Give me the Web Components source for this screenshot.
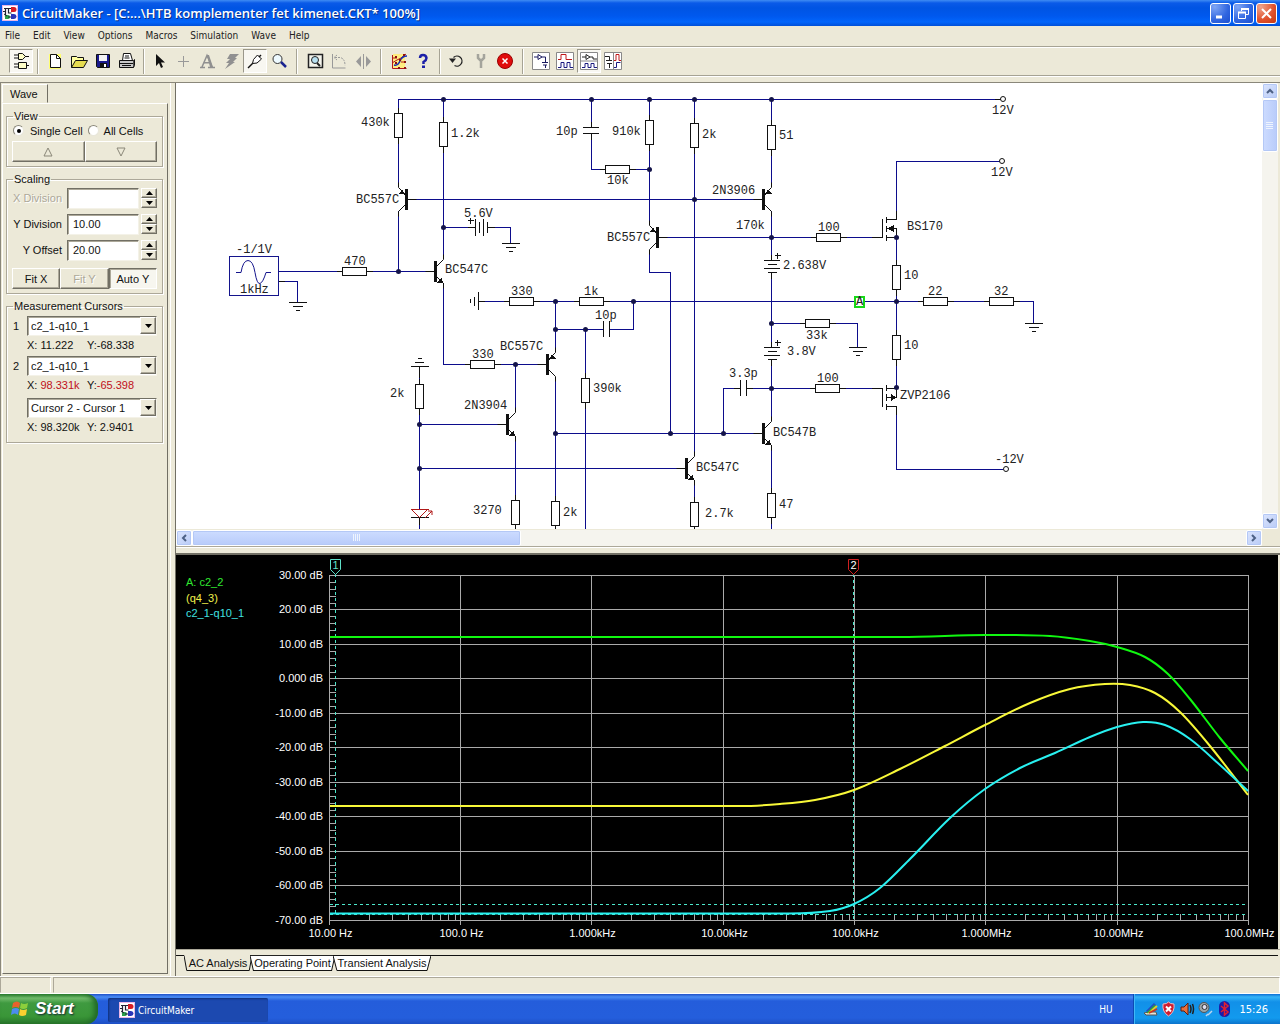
<!DOCTYPE html>
<html lang="en">
<head>
<meta charset="utf-8">
<title>CircuitMaker</title>
<style>
html,body{margin:0;height:100%}
body{background:#ece9d8;overflow:hidden}
</style>
</head>
<body>
<circuit-app></circuit-app>
<script>
const UI = '"DejaVu Sans Condensed","DejaVu Sans",sans-serif';
const SANS = '"Liberation Sans",Arial,sans-serif';
const BASE = ':host{display:block;box-sizing:border-box}*{box-sizing:border-box}button,input,select{font:inherit;color:inherit;margin:0;padding:0;border:0;border-radius:0;background:none;appearance:none}svg{display:block}';

function define(name, css, html) {
  customElements.define(name, class extends HTMLElement {
    constructor() {
      super();
      this.attachShadow({ mode: 'open' });
    }
    connectedCallback() {
      const body = typeof html === 'function' ? html(this) : html;
      this.shadowRoot.innerHTML = '<style>' + BASE + css + '</style>' + body;
    }
  });
}

const APP_ICON = `<svg width="16" height="16" viewBox="0 0 16 16"><rect width="16" height="16" fill="#e9b6e6"/><rect x="1" y="1" width="14" height="14" fill="#fff"/>
<path d="M2 3.500h7M3.500 3v9M6.500 3v5h3M1 6.500h3" stroke="#223" stroke-width="1.200" fill="none"/><path d="M9 2h3a2.500 2.500 0 0 1 0 5H9z" fill="#d81c24"/><path d="M3 10h3a2 2 0 0 1 0 4H3z" fill="#2aa14c"/><path d="M9 9h3a2.500 2.500 0 0 1 0 5H9z" fill="#2b35b8"/><path d="M2 9l3 2M9 12H6" stroke="#223"/></svg>`;

/* ---------- title bar ---------- */
define('title-bar', `
:host{height:26px;background:linear-gradient(#3f8cf3 0,#0a5ae8 3px,#0054e3 8px,#0058ee 16px,#0265fb 22px,#0150d8 26px);display:flex;align-items:center;padding:0 3px 0 2px;gap:4px;color:#fff}
h1{flex:1;margin:0;font:600 13px "Open Sans","Noto Sans",sans-serif;white-space:nowrap;text-shadow:1px 1px 0 #0a2f86}
.b{width:21px;height:21px;border:1px solid #fff;border-radius:3px;background:radial-gradient(circle at 20% 15%,#7fa6f5,#3066e0 60%,#1c4fd0);display:grid;place-items:center}
.x{background:radial-gradient(circle at 20% 15%,#f0a48c,#e0502b 60%,#c63a12)}
.w{display:flex;gap:2px}`,
`${APP_ICON}<h1>CircuitMaker - [C:...\\HTB komplementer fet kimenet.CKT* 100%]</h1><div class="w">
<button class="b" aria-label="Minimize"><svg width="13" height="13"><path d="M2 10h6" stroke="#fff" stroke-width="3"/></svg></button>
<button class="b" aria-label="Restore"><svg width="13" height="13" fill="none" stroke="#fff"><path d="M4.500 4V1.500h7v6H9" /><path d="M4 2h8M1 5.500h8" stroke-width="2"/><path d="M1.500 5.500h7v6h-7z"/></svg></button>
<button class="b x" aria-label="Close"><svg width="13" height="13"><path d="M2 2l9 9M11 2l-9 9" stroke="#fff" stroke-width="2"/></svg></button></div>`);

/* ---------- menu bar ---------- */
define('menu-bar', `
:host{height:20px;padding-left:5px;font:10px ${UI};color:#222}
nav{display:flex;gap:13px;height:18px;align-items:center}`,
'<nav>' + ['File', 'Edit', 'View', 'Options', 'Macros', 'Simulation', 'Wave', 'Help'].map(t => `<button>${t}</button>`).join('') + '</nav>');

/* ---------- tool bar ---------- */
const ICONS = {
  parts: `<g fill="#ffffc8" stroke="#111"><path d="M6.500 1.500h4l3 3-3 3h-4zM2 3h4M2 6h4M13 4.500h4M6.500 10.500h8v6h-8zM2 12h4M2 15h4M15 13.500h2" /></g>`,
  new: `<path d="M3 2h12v15H3z" fill="#ffff70"/><path d="M4.500 2.500h6l4 4v9h-10z" fill="#fff" stroke="#111"/><path d="M10.500 2.500v4h4" fill="none" stroke="#111"/>`,
  open: `<path d="M1.500 15.500v-11h5l1 1h6v3" fill="#ffffa0" stroke="#111"/><path d="M1.500 15.500l4-7h12l-4 7z" fill="#e6dc50" stroke="#111"/>`,
  save: `<path d="M2.500 2.500h13v13h-12l-1-1z" fill="#1a1a8c" stroke="#111"/><path d="M5 3h8v6H5z" fill="#f4f4f4"/><path d="M6 11h7v4H6z" fill="#111"/><path d="M10 12h2v3h-2z" fill="#fff"/>`,
  print: `<path d="M4.500 8.500l1-7h7l2 7" fill="#fff" stroke="#111"/><path d="M7 4h4M6.500 6h5" stroke="#111"/><path d="M1.500 8.500h14v7h-14z" fill="#c8c8c8" stroke="#111"/><path d="M2 11.500h13M4 13.500h9" stroke="#111"/><path d="M15.500 8.500l1-1v6l-1 2" fill="#888" stroke="#111"/>`,
  arrow: `<path d="M5 2v12l3-3 2 5 2-1-2-4.500h4z" fill="#111"/>`,
  plus: `<path d="M9.500 4v11M4 9.500h11" stroke="#999"/>`,
  text: `<path d="M2 15.500h5M10 15.500h7M4 15L9 3.500 14 15" stroke="#909090" stroke-width="1.500" fill="none"/><path d="M9 3l2 0 4 12h-3zM6 10h6v1.500H6z" fill="#909090"/>`,
  bolt: `<path d="M8 2h9l-4 4h2l-4 4h2L3 17l4-6H4l4-4H5z" fill="#909090"/>`,
  probe: `<path d="M2 16l5-5" stroke="#111" stroke-width="1.500"/><path d="M6.500 11.500l1-4 4-4.500 4 4-4.500 4z" fill="#fff" stroke="#111"/><path d="M13 5l2-2" stroke="#111" stroke-width="1.500"/>`,
  lens: `<circle cx="7.500" cy="7" r="4.500" fill="#eefaff" stroke="#333"/><path d="M11 10l5 5" stroke="#1a2490" stroke-width="2.500"/>`,
  fit: `<path d="M2.500 2.500h14v13h-14z" fill="#f4f4ec" stroke="#222" stroke-width="1.500"/><circle cx="9" cy="8" r="3.500" fill="#b8e0f0" stroke="#222"/><path d="M11 11l3 3" stroke="#222" stroke-width="2"/>`,
  rotate: `<path d="M2.500 2v14h13" stroke="#999" fill="none"/><path d="M5 5.500h5q5 1 5 8M7 3L4 5.500 7 8" stroke="#999" stroke-dasharray="2 1" fill="none"/>`,
  mirror: `<path d="M7 4v11L2 9.500zM12 4v11l5-5.500z" fill="#999"/><path d="M9.500 2v15" stroke="#999"/>`,
  scope: `<path d="M3 2h12v15H3z" fill="#ffee80"/><path d="M2.500 3v13.500h14M2 11l5-3 4-2 5-4M3 6h4M11 10h5" stroke="#b01818" fill="none"/><path d="M4 13q4 1 6-4t7-5" stroke="#1830b0" stroke-width="1.500" fill="none"/><path d="M5 4h2v2H5zM13 2h2v2h-2zM9 7h2v2H9zM5 10h2v2H5zM14 9h2v2h-2zM8 15h2v2H8zM14 15h2v2h-2z" fill="#8c1010"/>`,
  help: `<path d="M6 6q0-3 3-3t3.500 3q0 2-3 4v2" stroke="#1c20a8" stroke-width="2.500" fill="none"/><path d="M8 13.500h3V16H8z" fill="#1c20a8"/>`,
  reset: `<path d="M5.500 5.500a5 5 0 1 1 1 8" stroke="#222" stroke-width="1.300" fill="none"/><path d="M1 6.500h7L4.500 11z" fill="#222"/>`,
  step: `<path d="M6 2v4l2 2h2l2-2V2M9 8v8" stroke="#a4a49c" stroke-width="2.500" fill="none"/>`,
  stop: `<circle cx="9" cy="9" r="7.500" fill="#e00c0c" stroke="#900"/><path d="M6.500 6.500l5 5M11.500 6.500l-5 5" stroke="#fff" stroke-width="1.500"/>`,
  w1: `<path d="M.5.500h17v17H.5z" fill="#fff" stroke="#888"/><path d="M2 5h4M6 2.500v5l4-2.500zM10 5h3.500v5M10 10.500h6M11 13h4M13.500 13v3" stroke="#1a1a60" fill="none"/>`,
  w2: `<path d="M.5.500h17v17H.5z" fill="#fff" stroke="#888"/><path d="M2 7.500h3v-5h5v5h6" stroke="#c01818" fill="none"/><path d="M2 15.500h3v-5h3v5h3v-5h3v5h3" stroke="#1a1a80" fill="none"/>`,
  w3: `<path d="M.5.500h17v17H.5z" fill="#fff" stroke="#888"/><path d="M2 5h4M6 2.500v5l4-2.500zM10 5h3v2h4" stroke="#222" fill="none"/><path d="M0 9h18" stroke="#888"/><path d="M2 15.500h3v-4h3v4h3v-4h3v4h3" stroke="#1a1a80" fill="none"/>`,
  w4: `<path d="M.5.500h17v17H.5z" fill="#fff" stroke="#888"/><path d="M9.500 0v18" stroke="#888"/><path d="M1 4.500h4.500v4M2 8.500h6M3 11.500h5M5.500 11v5" stroke="#222" fill="none"/><path d="M10 8.500h2v-6h3v6h2" stroke="#c01818" fill="none"/><path d="M10 15.500h2.500v-5h4" stroke="#1a1a80" fill="none"/>`
};
define('tool-button', `
:host{width:24px;height:24px}
:host([narrow]){width:22px}
button{width:100%;height:100%;display:grid;place-items:center;border:1px solid transparent}
:host([pressed]) button{background:#f8f7f1;border-color:#9a978a #fff #fff #9a978a}`,
el => `<button aria-label="${el.getAttribute('icon')}"><svg width="18" height="18" viewBox="0 0 18 18">${ICONS[el.getAttribute('icon')]}</svg></button>`);
define('tool-sep', `:host{width:10px;height:25px;display:flex;justify-content:center}:host([wide]){width:12px}i{width:2px;background:#a6a394;border-right:1px solid #fff}`, '<i></i>');
const tb = s => s.split(' ').map(n => n === '|' ? '<tool-sep></tool-sep>' : n === '||' ? '<tool-sep wide></tool-sep>'
  : `<tool-button icon="${n.replace(/[!~]/, '')}"${n.endsWith('!') ? ' pressed' : ''}${n.endsWith('~') ? ' narrow' : ''}></tool-button>`).join('');
define('tool-bar', `
:host{height:30px;border-top:1px solid #a6a394;border-bottom:1px solid #a6a394;box-shadow:inset 0 1px #fff,0 1px #fff;display:flex;align-items:center;padding-left:9px}`,
tb('parts! | new open save print | arrow~ plus text bolt probe! lens || fit rotate mirror || scope help | reset step stop || w1 w2 w3! w4'));

/* ---------- wave side panel ---------- */
define('group-box', `
fieldset{margin:0;min-width:0;border:1px solid #aca899;box-shadow:1px 1px #fff,inset 1px 1px #fff;padding:0 5px 4px;position:relative}
legend{padding:0 1px;margin-left:1px;line-height:12px;height:12px}`,
el => `<fieldset><legend>${el.getAttribute('label')}</legend><slot></slot></fieldset>`);

const RAISED = 'background:#ece9d8;border:1px solid;border-color:#fff #716f64 #716f64 #fff;box-shadow:inset -1px -1px #aca899';
define('cell-view', `
.r{display:flex;height:17px;align-items:center;padding-left:1px}
label{display:flex;align-items:center;gap:6px;line-height:14px;margin-right:5px}
label+label{gap:5px}
input{width:11px;height:11px;border-radius:50%;background:#fff;border:1px solid #8a877a;border-right-color:#e8e6da;border-bottom-color:#e8e6da;display:grid;place-items:center}
input:checked::after{content:"";width:4px;height:4px;border-radius:50%;background:#000}
.b{display:flex;margin-top:2px}
.b button{flex:1;height:21px;${RAISED};display:grid;place-items:center}`,
`<div class="r"><label><input type="radio" name="c" checked>Single Cell</label><label><input type="radio" name="c">All Cells</label></div>
<div class="b"><button aria-label="Up"><svg width="10" height="10"><path d="M5 1l4 8H1z" fill="none" stroke="#8a8778"/></svg></button><button aria-label="Down"><svg width="10" height="10"><path d="M5 9l4-8H1z" fill="none" stroke="#8a8778"/></svg></button></div>`);

define('number-row', `
:host{display:flex;align-items:center;height:26px}
label{width:50px;text-align:right;white-space:nowrap}
:host([off]) label{color:#aca899;text-shadow:1px 1px #fff}
input{flex:1;min-width:0;height:21px;margin:0 2px 0 5px;background:#fff;padding:0 0 0 5px;border:1px solid;border-color:#716f64 #f4f2e8 #f4f2e8 #716f64;box-shadow:inset 1px 1px #aca899}
.s{width:16px;display:grid}
.s button{height:10px;${RAISED};display:grid;place-items:center}`,
el => `<label for="n">${el.getAttribute('label')}</label><input id="n" value="${el.getAttribute('value')}"${el.hasAttribute('off') ? ' disabled' : ''}>
<div class="s"><button aria-label="Increase"><svg width="7" height="4"><path d="M3.500 0L7 4H0z"/></svg></button><button aria-label="Decrease"><svg width="7" height="4"><path d="M3.500 4L7 0H0z"/></svg></button></div>`);

define('fit-buttons', `
:host{display:flex;margin-top:5px}
button{flex:1;height:21px;${RAISED};white-space:nowrap}
button:disabled{color:#aca899;text-shadow:1px 1px #fff}
.on{background:#f7f6ef;border-color:#716f64 #fff #fff #716f64;box-shadow:inset 1px 1px #aca899;padding-top:1px}`,
'<button>Fit X</button><button disabled>Fit Y</button><button class="on">Auto Y</button>');

define('cursor-pick', `
:host{display:grid;grid-template-columns:14px 1fr;padding-left:1px;align-items:center}
.c{display:grid;height:20px;background:#fff;border:1px solid;border-color:#716f64 #f4f2e8 #f4f2e8 #716f64;box-shadow:inset 1px 1px #aca899}
.c>*{grid-area:1/1}
select{width:100%;padding-left:3px;height:18px}
.a{justify-self:end;width:16px;height:17px;${RAISED};display:grid;place-items:center;pointer-events:none}
p{grid-column:2;margin:0;height:20px;line-height:19px;display:flex;white-space:pre}
p span{width:60px}
:host([red]) b{color:#c01020}
b{font-weight:normal}`,
el => { const a = n => el.getAttribute(n) || '';
  return `<label for="s">${a('n')}</label><div class="c"><select id="s" aria-label="${a('value')}"><option>${a('value')}</option></select><i class="a"><svg width="7" height="4"><path d="M3.500 4L7 0H0z"/></svg></i></div>
<p><span>X: <b>${a('x')}</b></span>Y:<b>${a('y')}</b></p>`; });

define('wave-panel', `
:host{width:176px;font:11px ${SANS};color:#111;display:flex;flex-direction:column;border-left:1px solid #8a877a;border-right:1px solid #716f64;padding:1px 7px 2px 1px;box-shadow:inset -4px 0 #ece9d8,inset -5px 0 #fff}
.t{width:46px;height:19px;border:1px solid;border-color:#fff #716f64 transparent #fff;padding:1px 0 0 7px;text-align:left;line-height:14px}
.p{flex:1;border:1px solid;border-color:#fff #716f64 #716f64 #fff;padding:6px 4px 0 3px}
.g{margin-top:6px}
.top{height:4px}.gap{height:2px}`,
`<button class="t">Wave</button><section class="p">
<group-box label="View"><cell-view></cell-view></group-box>
<group-box class="g" label="Scaling"><number-row off label="X Division" value=""></number-row><number-row label="Y Division" value="10.00"></number-row><number-row label="Y Offset" value="20.00"></number-row><fit-buttons></fit-buttons></group-box>
<group-box class="g" label="Measurement Cursors"><div class="top"></div><cursor-pick n="1" value="c2_1-q10_1" x="11.222" y="-68.338"></cursor-pick><cursor-pick red n="2" value="c2_1-q10_1" x="98.331k" y="-65.398"></cursor-pick><div class="gap"></div><cursor-pick value="Cursor 2 - Cursor 1" x="98.320k" y=" 2.9401"></cursor-pick></group-box>
</section>`);

/* ---------- schematic ---------- */
const wire = d => `<path d="${d}" stroke="#0c0c8c"/>`;
const ink = d => `<path d="${d}" stroke="#111"/>`;
const node = (x, y) => `<circle cx="${x}" cy="${y}" r="2.500" fill="#14144a" stroke="none"/>`;
const resV = (x, y) => ink(`M${x} ${y - 18}v36`) + `<rect x="${x - 4}" y="${y - 12}" width="8" height="24" fill="#fff" stroke="#111"/>`;
const resH = (x, y) => ink(`M${x - 18} ${y}h36`) + `<rect x="${x - 12}" y="${y - 4}" width="24" height="8" fill="#fff" stroke="#111"/>`;
const gnd = (x, y) => ink(`M${x - 9} ${y}h18M${x - 5} ${y + 4}h10M${x - 2} ${y + 8}h4`);
const plus = (x, y) => ink(`M${x - 3} ${y}h6M${x} ${y - 3}v6`);
const cellsV = (x, y) => `<path d="M${x} ${y}v12" stroke="#fff" stroke-width="3"/>` + ink(`M${x - 8} ${y}h16M${x - 4} ${y + 4}h9M${x - 8} ${y + 8}h16M${x - 4} ${y + 12}h9M${x} ${y - 6}v6M${x} ${y + 12}v6`);
/* side: direction from the bar to the emitter/collector leads; emit: -1 up (PNP), 1 down (NPN) */
function bjt(x, y, side, emit) {
  const e = x + side * 8, g = x + side;
  const head = emit < 0
    ? `M${g + side} ${y - 5}l${side * 2} -5l${side * 4} 4z`
    : `M${e} ${y + 12}l${side * -2} -6l${side * -4} 5z`;
  return `<rect x="${x - 1.5}" y="${y - 10.500}" width="3" height="21" fill="#111" stroke="none"/>` +
    `<path d="M${e} ${y - 17}v5L${g} ${y - 5}M${g} ${y + 5}L${e} ${y + 12}v5M${x} ${y}h${-side * 10}" stroke="#111" shape-rendering="auto"/><path d="${head}" fill="#111" stroke="none"/>`;
}
const pin = (x, y) => `<circle cx="${x}" cy="${y}" r="2.500" fill="#fff" stroke="#111" shape-rendering="auto"/>`;
const LABELS = [['430k',361,126],['1.2k',451,137],['BC557C',356,203],['5.6V',464,217],['BC547C',445,273],['-1/1V',236,253],['1kHz',240,293],['470',344,265],['330',511,295],
['10p',556,135],['910k',612,135],['2k',702,138],['51',779,139],['10k',607,184],['2N3906',712,194],['170k',736,229],['BC557C',607,241],['100',818,231],['2.638V',783,269],['1k',584,295],['10p',595,319],
['12V',992,114],['12V',991,176],['BS170',907,230],['10',904,279],['22',928,295],['32',994,295],['10',904,349],['A',856,305],
['BC557C',500,350],['330',472,358],['2k',390,397],['2N3904',464,409],['390k',593,392],['3270',473,514],['2k',563,516],
['33k',806,339],['3.8V',787,355],['3.3p',729,377],['100',817,382],['ZVP2106',900,399],['BC547B',773,436],['BC547C',696,471],['2.7k',705,517],['47',779,508],['-12V',995,463]];
define('schematic-view', `
:host{flex:1;min-width:0;background:#fff;overflow:hidden}
text{font:12px "Liberation Mono","Courier New",monospace;fill:#222}`,
() => `<svg width="100%" height="100%" aria-label="Amplifier schematic"><g transform="translate(-176 -83)"><g fill="none" stroke-width="1" shape-rendering="crispEdges">` +
wire('M398.5 99.500H995M398.5 99v86M443.5 99v158M398.5 211v60M408 199.500H755M443.5 227.500H474M488 227.500h22.500V243M278 271.500H434M278 281.500h19.500V302M443.5 285v79.500H546M479 301.500H896.5M591.5 99v28M591.5 134v35.500H649.5M649.5 99V222M649.5 250v22.500H670.5V433.500M694.5 99V456M771.5 99v86M660 237.500H882M771.5 211V260M771.5 272V347M771.5 359V421M1000 161.500H896.5V217M896.5 237V388M896.5 301.500H1033.5V323M771.5 323.500H857.5V347M555.5 301V352M555.5 329.500H603M610 329.500H633.5V301M585.5 329V530M515.5 364V412M419.5 370V509M419.5 424.500H500M419.5 468.500H680M419.5 517v12M515.5 440V530M555.5 377V530M555.5 433.500H755M723.5 433V388.500H740M747 388.500H882M694.5 481V530M771.5 447V530M896.5 407V469.500H1003') +
ink('M995 99.500h6M475.5 219v17M479.5 222v11M483.5 219v17M487.5 222v11M488 227.500h7M468 227.500h7M278 281.500h7M478.5 292v18M474.5 297v9M470.5 299v4M479 301.500h6M583 127.500h16M583 133.500h16M591.5 122v5M591.5 134v6M603.5 321v16M609.5 321v16M740.5 380v16M746.5 380v16M734 388.500h6M747 388.500h6M411 366.500h18M415 362.500h9M418 358.500h4M419.5 366v12M411 517.500h18M419.5 517v8') +
resV(398.5, 125.500) + resV(443.5, 134.500) + resV(649.5, 132.500) + resV(694.5, 135.500) + resV(771.5, 137.500) + resV(896.5, 277.500) + resV(896.5, 347.500) + resV(419.5, 396.500) + resV(585.5, 390.500) + resV(515.5, 512.500) + resV(555.5, 513.500) + resV(694.5, 514.500) + resV(771.5, 505.500) +
resH(354.5, 271.500) + resH(521.5, 301.500) + resH(591.5, 301.500) + resH(617.5, 169.500) + resH(828.5, 237.500) + resH(935.5, 301.500) + resH(1001.5, 301.500) + resH(482.5, 364.500) + resH(817.5, 323.500) + resH(827.5, 388.500) +
gnd(510.5, 243.500) + gnd(297.5, 302.500) + gnd(1033.5, 323.500) + gnd(857.5, 347.500) +
cellsV(771.5, 260.500) + cellsV(771.5, 347.500) + plus(470.5, 220.500) + plus(777.5, 255.500) + plus(777.5, 342.500) +
bjt(406.5, 199.500, -1, -1) + bjt(435.5, 271.500, 1, 1) + bjt(657.5, 237.500, -1, -1) + bjt(763.5, 199.500, 1, -1) + bjt(547.5, 364.500, 1, -1) + bjt(507.5, 424.500, 1, 1) + bjt(686.5, 468.500, 1, 1) + bjt(763.5, 433.500, 1, 1) +
ink('M872 237.500h10.500V219M886.5 217v6M886.5 226v6M886.5 235v6M886.5 219.500h10V211M886.5 228.500h10V237.500h-10M872 388.500h10.500V407M886.5 385v6M886.5 394v7M886.5 404v6M886.5 388.500h10V397.500h-10M886.5 406.500h10v8') +
`<path d="M887 228.500l7-3.500v7zM896 397.500l-5-3.500v7z" fill="#111"/>` +
`<path d="M411 509.500h18M411.5 509.500l8 8 8-8M425 518l7-7M428 511h4v4" stroke="#b01818" shape-rendering="auto"/>` +
`<path d="M229.5 256.500h49v38.500h-49z" stroke="#14148c"/><path d="M236 272.500h5q2-12 7-12t7 12 5 11 6-11h5" stroke="#14148c" shape-rendering="auto"/>` +
`<rect x="855" y="297" width="9" height="10" fill="#fff" stroke="#18d818" stroke-width="2"/>` +
pin(1003, 99) + pin(1002, 161) + pin(1006, 469) + `</g>` +
[[443.5,99.500],[591.5,99.500],[649.5,99.500],[694.5,99.500],[771.5,99.500],[443.5,227.500],[398.5,271.500],[649.5,169.500],[694.5,199.500],[771.5,237.500],[555.5,301.500],[633.5,301.500],[896.5,301.500],[896.5,237.500],[896.5,387.500],[771.5,323.500],[771.5,388.500],[555.5,329.500],[585.5,329.500],[515.5,364.500],[419.5,424.500],[419.5,468.500],[555.5,433.500],[670.5,433.500],[723.5,433.500]].map(p => node(...p)).join('') +
LABELS.map(([t, x, y]) => `<text x="${x}" y="${y}">${t}</text>`).join('') + `</g></svg>`);

/* ---------- scroll bars ---------- */
define('scroll-bar', `
:host{display:flex;background:#f5f4ee;height:16px}
:host([vertical]){flex-direction:column;width:16px;height:auto}
button,.th{flex:none;width:16px;height:16px;background:linear-gradient(135deg,#dbe5fe,#b9cbf6);border:1px solid #fff;border-radius:2px;box-shadow:inset 0 0 0 1px #b4c8f6;display:grid;place-items:center}
.th{width:329px;background:linear-gradient(#cddcff,#b8cbfa);color:#fff}
:host([vertical]) .th{width:16px;height:53px;background:linear-gradient(90deg,#cddcff,#b8cbfa)}
i{flex:1}`,
el => { const v = el.hasAttribute('vertical');
  const ar = d => `<svg width="8" height="8"><path d="${d}" fill="none" stroke="#4d6185" stroke-width="2"/></svg>`;
  return `<button aria-label="Back">${ar(v ? 'M1 6l3-3 3 3' : 'M6 1L3 4l3 3')}</button><div class="th"><svg width="8" height="8"><path d="${v ? 'M0 .5h7M0 2.500h7M0 4.500h7M0 6.500h7' : 'M.5 0v7M2.500 0v7M4.500 0v7M6.500 0v7'}" stroke="#eef4fe"/></svg></div><i></i><button aria-label="Forward">${ar(v ? 'M1 2l3 3 3-3' : 'M2 1l3 3-3 3')}</button>`; });

/* ---------- wave plot ---------- */
function curve(pts, color) {
  let d = `M${pts[0]}`;
  for (let i = 0; i < pts.length - 1; i++) {
    const a = pts[Math.max(i - 1, 0)], b = pts[i], c = pts[i + 1], e = pts[Math.min(i + 2, pts.length - 1)];
    const flat = b[1] === c[1];
    const k = (c[0] - b[0]) / 3, s1 = i && !flat && a[1] !== b[1] ? (c[1] - a[1]) / (c[0] - a[0]) : 0, s2 = flat ? 0 : (e[1] - b[1]) / (e[0] - b[0]);
    d += `C${b[0] + k} ${b[1] + k * s1} ${c[0] - k} ${c[1] - k * s2} ${c[0]} ${c[1]}`;
  }
  return `<path d="${d}" fill="none" stroke="${color}" stroke-width="2"/>`;
}
define('wave-plot', `
:host{height:394px;background:#000;overflow:hidden}
text{font:11px ${SANS};fill:#fff}`,
() => {
  const X = i => [329, 460, 591, 723, 854, 985, 1117, 1248][i] + .5, Y = i => Math.round(575 + i * 34.490) + .5;
  let g = '', t = '';
  for (let i = 0; i < 8; i++) {
    g += `M${X(i)} 575V925`;
    if (i < 7) for (let k = 2; k < 10; k++) g += `M${Math.round(X(i) + 131.14 * Math.log10(k)) + .5} 914V920`;
  }
  for (let i = 0; i < 11; i++) {
    g += `M330 ${Y(i)}H1248`;
    if (i < 10) for (let k = 1; k < 5; k++) g += `M330 ${Math.round(Y(i) + k * 6.900) + .5}h6`;
    const v = 30 - i * 10;
    t += `<text x="323" y="${Y(i) + 3.5}" text-anchor="end">${v === 0 ? '0.000' : v + '.00'} dB</text>`;
  }
  ['10.00 Hz', '100.0 Hz', '1.000kHz', '10.00kHz', '100.0kHz', '1.000MHz', '10.00MHz', '100.0MHz'].forEach((s, i) => t += `<text x="${X(i) + 1}" y="937" text-anchor="middle">${s}</text>`);
  return `<svg width="100%" height="100%" aria-label="AC analysis plot"><g transform="translate(-176 -555)">
<path d="${g}" stroke="#aaa" fill="none" shape-rendering="crispEdges"/>
<path d="M335.5 574V914M853.5 574V920M330 904.500H1248M330 914.500H1248" stroke="#4ce8cc" stroke-dasharray="3 3" fill="none" shape-rendering="crispEdges"/>` +
  curve([[330, 637], [600, 637], [900, 637], [985, 635], [1050, 636], [1090, 641], [1117, 647], [1145, 657], [1168, 674], [1190, 699], [1220, 738], [1248, 771]], '#10f810') +
  curve([[330, 806], [600, 806], [740, 806], [780, 804], [815, 800], [854, 790], [900, 769], [945, 746], [985, 725], [1030, 703], [1070, 689], [1105, 684], [1130, 685], [1155, 693], [1180, 712], [1210, 746], [1248, 795]], '#f8f838') +
  curve([[330, 913.5], [600, 913.5], [790, 913.5], [830, 911], [854, 904], [880, 888], [910, 859], [950, 818], [985, 789], [1020, 768], [1055, 753], [1090, 737], [1117, 727], [1143, 722], [1165, 725], [1190, 739], [1220, 765], [1248, 791]], '#28f0f0') +
  `<path d="M330.5 559.500h10v10l-5 5-5-5z" fill="#000" stroke="#5fe0c8"/><path d="M848.5 559.500h10v10l-5 5-5-5z" fill="#000" stroke="#d02020"/>
<text x="335.500" y="569" text-anchor="middle" style="fill:#5fe0c8">1</text><text x="853.500" y="569" text-anchor="middle">2</text>
<text x="186" y="586" style="fill:#30e830">A: c2_2</text><text x="186" y="602" style="fill:#f0f04c">(q4_3)</text><text x="186" y="617" style="fill:#40e0e0">c2_1-q10_1</text>` + t + `</g></svg>`;
});

/* ---------- sheet tabs ---------- */
define('sheet-tabs', `
:host{display:flex;height:27px;padding:5px 2px 0 0;font:11px ${SANS};color:#111;border-top:1px solid #aca899}
i{border-top:1px solid #111}
.l{width:8px}.r{flex:1}
button{display:grid;height:17px;width:85px;margin-right:-2px}
button>*{grid-area:1/1}
button svg{width:100%;height:17px}
button:first-of-type{width:68px}button:last-of-type{width:98px}
span{line-height:16px;white-space:nowrap;justify-self:center}`,
'<i class="l"></i>' + [['AC Analysis', 1], ['Operating Point'], ['Transient Analysis']].map(([t, on]) =>
  `<button><svg viewBox="0 0 100 17" preserveAspectRatio="none"><path d="M0 .5L4 15.500H96L100 .5" fill="${on ? '#ece9d8' : '#fff'}" stroke="#111" vector-effect="non-scaling-stroke"/>${on ? '' : '<path d="M0 .5H100" stroke="#111"/>'}</svg><span>${t}</span></button>`).join('') + '<i class="r"></i>');

/* ---------- status bar ---------- */
define('status-bar', `
:host{display:flex;gap:2px;height:18px;border-top:1px solid #fff;border-bottom:1px solid #fff}
i{border:1px solid;border-color:#aca899 #fff transparent #aca899;width:51px}
i+i{flex:1}`, '<i></i><i></i>');

/* ---------- task bar ---------- */
define('task-bar', `
:host{display:flex;height:30px;background:linear-gradient(#1f51c8 0,#4a8cf4 3px,#245ddb 7px,#245edc 24px,#1d4fc4 30px);color:#fff;font:10px ${UI}}
.s{width:98px;height:30px;border-radius:0 12px 12px 0;background:linear-gradient(#2f8a35 0,#74bd6d 4px,#3f9a40 9px,#3a9638 22px,#2a7a2c 30px);box-shadow:inset -4px 0 5px #226a26;display:flex;align-items:center;gap:6px;padding-left:11px;font:italic bold 17px ${SANS};text-shadow:1px 1px 2px #123}
.k{margin:4px 0 2px 10px;width:160px;border-radius:2px;background:#1c49b0;box-shadow:inset 1px 1px 2px #10307c;display:flex;align-items:center;gap:3px;padding-left:11px}
.f{flex:1}
.h{align-self:center;margin-right:21px}
.t{display:flex;align-items:center;gap:3px;padding:0 12px 0 9px;border-left:1px solid #0c4ab4;background:linear-gradient(#0d6fd4 0,#35b4f8 3px,#1290e8 8px,#129aee 24px,#0c74cc 30px);box-shadow:inset 1px 0 #40b8f8}
time{margin-left:4px;font-size:11px}`,
`<button class="s"><svg width="18" height="18" viewBox="0 0 18 18"><path d="M2 3q4-3 7 0L8 8q-3-2-7 0z" fill="#e8622c"/><path d="M10 3q3 2 7 0l-1 5q-4 2-7 0z" fill="#8ccf3c"/><path d="M1 9q4-2 7 0l-1 6q-3-3-7 0z" fill="#4c8cf0"/><path d="M9 9q3 2 7 0l-1 6q-4 2-7 0z" fill="#fad030"/></svg>Start</button>
<button class="k">${APP_ICON}CircuitMaker</button><span class="f"></span><span class="h">HU</span>
<div class="t"><svg width="15" height="16" viewBox="0 0 15 16"><path d="M1 12l5-1h7l1 3H3z" fill="#e4e4d8" stroke="#555"/><path d="M4 11L12 3" stroke="#2448c8" stroke-width="3"/><path d="M5 12l9-7" stroke="#e8d020" stroke-width="2"/><path d="M6 12l8-4" stroke="#d03020" stroke-width="1.500"/><path d="M4 12l8-8" stroke="#28a040" stroke-width="1.500"/></svg>
<svg width="15" height="16" viewBox="0 0 15 16"><path d="M2 3q4 0 5.500-2Q9 3 13 3q1 8-5.500 12Q1 11 2 3z" fill="#d01c30" stroke="#e8b8c0"/><path d="M5 5.500l5 5M10 5.500l-5 5" stroke="#fff" stroke-width="2"/></svg>
<svg width="16" height="16" viewBox="0 0 16 16"><path d="M2 6h3l4-4v12l-4-4H2z" fill="#e8703c" stroke="#5c1c10"/><path d="M11 4q2 4 0 8M13.500 3q2 5 0 10" stroke="#222" fill="none" stroke-width="1.500"/></svg>
<svg width="15" height="16" viewBox="0 0 15 16"><circle cx="6" cy="6.500" r="5" fill="#9aa4a8" stroke="#555"/><circle cx="6.500" cy="6" r="2.500" fill="#dde" stroke="#333"/><path d="M10 14l4-4M8 15l2-2" stroke="#bcd4ec" stroke-width="1.500"/></svg>
<svg width="16" height="16" viewBox="0 0 16 16"><rect x="3" y="0" width="11" height="16" rx="5.500" fill="#1c1ca8"/><path d="M5 5l7 6-3.500 3V2L12 5l-7 6" stroke="#e02030" stroke-width="1.500" fill="none"/></svg>
<time>15:26</time></div>`);

/* ---------- application frame ---------- */
define('circuit-app', `
:host{display:flex;flex-direction:column;height:100vh;background:#ece9d8}
main{flex:1;min-height:0;display:flex;margin-top:6px;border-top:1px solid #8a877a}
.w{flex:1;min-width:0;display:flex;flex-direction:column}
.s{flex:1;min-height:0;display:flex;padding-right:2px}
.h{display:flex;padding:1px 18px 0 0}
.h scroll-bar{flex:1}
.d{height:9px;border-top:1px solid #aca899;border-bottom:2px solid #716f64;box-shadow:inset 0 1px #fff}
.p{padding-right:2px}`,
`<title-bar></title-bar><menu-bar></menu-bar><tool-bar></tool-bar>
<main><wave-panel></wave-panel><div class="w">
<div class="s"><schematic-view></schematic-view><scroll-bar vertical></scroll-bar></div>
<div class="h"><scroll-bar></scroll-bar></div><div class="d"></div>
<div class="p"><wave-plot></wave-plot></div><sheet-tabs></sheet-tabs></div></main>
<status-bar></status-bar><task-bar></task-bar>`);
</script>
</body>
</html>
